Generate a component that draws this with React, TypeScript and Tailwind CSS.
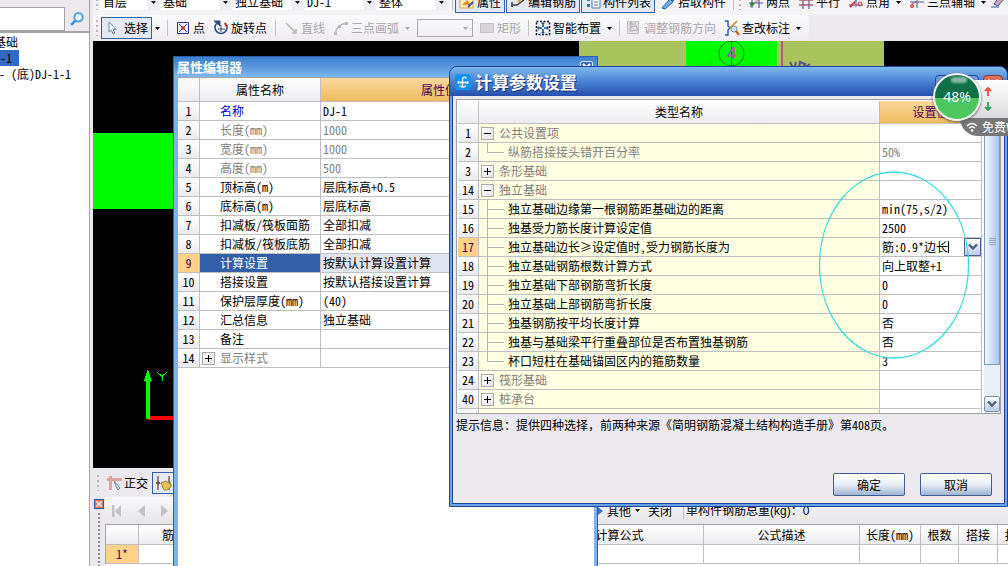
import React, { ReactNode } from "react";

type PropRow = { n: number; name: string; value?: string; tone?: "blue" | "gray"; group?: boolean; selected?: boolean };
type ParamRow = { n: number; name: string; value?: string; kind: "open" | "closed" | "child" | "last"; gray?: boolean; editing?: boolean };

const propRows: PropRow[] = [
  { n: 1, name: "名称", value: "DJ-1", tone: "blue" },
  { n: 2, name: "长度(mm)", value: "1000", tone: "gray" },
  { n: 3, name: "宽度(mm)", value: "1000", tone: "gray" },
  { n: 4, name: "高度(mm)", value: "500", tone: "gray" },
  { n: 5, name: "顶标高(m)", value: "层底标高+0.5" },
  { n: 6, name: "底标高(m)", value: "层底标高" },
  { n: 7, name: "扣减板/筏板面筋", value: "全部扣减" },
  { n: 8, name: "扣减板/筏板底筋", value: "全部扣减" },
  { n: 9, name: "计算设置", value: "按默认计算设置计算", selected: true },
  { n: 10, name: "搭接设置", value: "按默认搭接设置计算" },
  { n: 11, name: "保护层厚度(mm)", value: "(40)" },
  { n: 12, name: "汇总信息", value: "独立基础" },
  { n: 13, name: "备注" },
  { n: 14, name: "显示样式", tone: "gray", group: true },
];

const paramRows: ParamRow[] = [
  { n: 1, name: "公共设置项", kind: "open", gray: true },
  { n: 2, name: "纵筋搭接接头错开百分率", value: "50%", kind: "last", gray: true },
  { n: 3, name: "条形基础", kind: "closed", gray: true },
  { n: 14, name: "独立基础", kind: "open", gray: true },
  { n: 15, name: "独立基础边缘第一根钢筋距基础边的距离", value: "min(75,s/2)", kind: "child" },
  { n: 16, name: "独基受力筋长度计算设定值", value: "2500", kind: "child" },
  { n: 17, name: "独立基础边长≥设定值时,受力钢筋长度为", value: "筋:0.9*边长", kind: "child", editing: true },
  { n: 18, name: "独立基础钢筋根数计算方式", value: "向上取整+1", kind: "child" },
  { n: 19, name: "独立基础下部钢筋弯折长度", value: "0", kind: "child" },
  { n: 20, name: "独立基础上部钢筋弯折长度", value: "0", kind: "child" },
  { n: 21, name: "独基钢筋按平均长度计算", value: "否", kind: "child" },
  { n: 22, name: "独基与基础梁平行重叠部位是否布置独基钢筋", value: "否", kind: "child" },
  { n: 23, name: "杯口短柱在基础锚固区内的箍筋数量", value: "3", kind: "last" },
  { n: 24, name: "筏形基础", kind: "closed", gray: true },
  { n: 40, name: "桩承台", kind: "closed", gray: true },
];

const Icon = ({ children }: { children: ReactNode }) => (
  <svg viewBox="0 0 16 16" className="h-4 w-4 shrink-0" aria-hidden="true">{children}</svg>
);

const Caret = ({ muted = false }: { muted?: boolean }) => (
  <svg viewBox="0 0 5 3" className={muted ? "h-[3px] w-[5px] shrink-0 text-[#a8a6aa]" : "h-[3px] w-[5px] shrink-0 text-black"} aria-hidden="true">
    <path d="M0 0h5L2.5 3z" fill="currentColor" />
  </svg>
);

const Grip = () => <span className="mx-[3px] h-4 w-[2px] shrink-0 bg-[repeating-linear-gradient(#b9b7bb_0_2px,transparent_2px_5px)]" />;
const Sep = ({ wide }: { wide?: boolean }) => (
  <span className={"flex h-4 shrink-0 justify-center " + (wide ? "w-2" : "w-1.5")}><span className="w-px bg-[#c2c0c5]" /></span>
);

function Tool({ icon, label, muted, framed, caret }: { icon: ReactNode; label: string; muted?: boolean; framed?: boolean; caret?: boolean }) {
  return (
    <button
      disabled={muted}
      className={
        "flex h-[22px] shrink-0 items-center gap-0.5 whitespace-nowrap " +
        (muted ? "px-1 text-[#a8a6aa] " : "text-black ") +
        (framed ? "border border-[#335ea8] bg-[#e4e8f2] px-[3px]" : "px-1")
      }
    >
      <Icon>{icon}</Icon>
      {label}
      {caret && <span className="ml-1 flex"><Caret muted={muted} /></span>}
    </button>
  );
}

function Combo({ label, value, narrow }: { label: string; value: string; narrow?: boolean }) {
  return (
    <span className={"mr-0.5 flex h-4 shrink-0 items-center bg-white pl-[2px] " + (narrow ? "w-[58px]" : "w-[70px]")}>
      <select aria-label={label} className="min-w-0 flex-1 appearance-none bg-transparent">
        <option>{value}</option>
      </select>
      <span className="flex h-full w-[11px] items-center justify-center bg-[#efedf1]"><Caret /></span>
    </span>
  );
}

function TreeBox({ open, name }: { open?: boolean; name: string }) {
  return (
    <button aria-label={name} aria-expanded={!!open} className="h-[13px] w-[13px] shrink-0 border border-[#a9a9a9] bg-linear-to-br from-white to-[#e4e4e4]">
      <svg viewBox="0 0 11 11" className="h-[11px] w-[11px]" shapeRendering="crispEdges" aria-hidden="true">
        <path d={open ? "M2 5h7v1H2z" : "M2 5h7v1H2zM5 2h1v7H5z"} />
      </svg>
    </button>
  );
}

const Chevron = () => (
  <svg viewBox="0 0 10 8" className="h-2 w-2.5" aria-hidden="true">
    <path d="M1 1.5l4 4 4-4" fill="none" stroke="#4d6185" strokeWidth="2.4" />
  </svg>
);

function Sidebar() {
  return (
    <aside className="flex w-[90px] shrink-0 flex-col border-r border-[#a5a3a8] bg-[#ebe9ed] pt-[7px]">
      <div className="flex h-[26px] items-start border-b-2 border-[#a5a3a8]">
        <input aria-label="搜索构件" className="h-6 w-[65px] border border-l-0 border-[#a5a3a8] bg-white px-1" />
        <button aria-label="搜索" className="flex h-6 flex-1 items-center justify-center">
          <svg viewBox="0 0 14 14" className="h-3.5 w-3.5" aria-hidden="true">
            <circle cx="8.5" cy="5.3" r="4.2" fill="#e9f5ff" stroke="#4aa3e6" strokeWidth="2" />
            <path d="M5.6 8.4L1.2 12.8" stroke="#3b8fd8" strokeWidth="2.6" />
          </svg>
        </button>
      </div>
      <ul className="flex-1 bg-white pt-px leading-4">
        <li className="-ml-1.5">基础</li>
        <li><span className="inline-block h-4 w-[19px] bg-[#316ac5]"><span className="-ml-1.5">J-1</span></span></li>
        <li className="flex gap-1.5"><span className="-ml-px w-1.5">-</span>(底)DJ-1-1</li>
      </ul>
    </aside>
  );
}

function TopToolbar() {
  return (
    <div className="flex h-[15px] items-end overflow-hidden bg-[#f4f3f6] pb-0.5 whitespace-nowrap">
      <div className="flex h-[22px] items-center">
        <Grip />
        <Combo label="楼层" value="首层" narrow />
        <Combo label="构件类型" value="基础" />
        <Combo label="构件" value="独立基础" />
        <Combo label="构件名称" value="DJ-1" />
        <Combo label="分层" value="整体" />
        <Sep />
        <div className="flex gap-px">
          <Tool framed label="属性" icon={<><path d="M1 3h13v11H1z" fill="#fff2c4" stroke="#e2a13a" /><path d="M3 11l5-5 4 5z" fill="#e5872a" /><path d="M9 13l5-5" stroke="#35589b" strokeWidth="2" /></>} />
          <Tool framed label="编辑钢筋" icon={<><path d="M1 11h6l7-5M2 8v5" fill="none" stroke="#444" strokeWidth="1.5" /><path d="M8 8l6-6" stroke="#d6a12a" strokeWidth="2" /></>} />
          <Tool framed label="构件列表" icon={<><path d="M2 4h3v3H2zM2 10h3v3H2z" fill="#3b6fc4" /><path d="M7 1h8v13H7z" fill="#f6f9ff" stroke="#5577aa" /><path d="M9 5h4M9 8h4M9 11h4" stroke="#5577aa" /></>} />
          <Tool label="拾取构件" icon={<path d="M2 14l8-9 3 3-8 7zM9 4l3-3 3 4-2 2z" fill="#75aee8" stroke="#245a9b" />} />
        </div>
        <Sep />
        <Grip />
        <Tool label="两点" icon={<><path d="M4 0v14M11 0v14M1 9h14" stroke="#4b5d9c" strokeWidth="1.2" /><path d="M2 13L13 3" stroke="#c23a3a" /><circle cx="4" cy="10" r="2" fill="#2f8b3a" /></>} />
        <Tool label="平行" icon={<><path d="M5 0v15M11 0v15" stroke="#4b5d9c" strokeWidth="1.2" /><path d="M1 6h14M1 11h14" stroke="#b25b5b" strokeWidth="1.3" /></>} />
        <Tool label="点角" caret icon={<><path d="M2 13L13 1M1 11h14M8 1v12" stroke="#4b5d9c" /><path d="M2 13l5-5" stroke="#d33" strokeWidth="2" /><circle cx="12" cy="10" r="2" fill="none" stroke="#d33" /></>} />
        <Tool label="三点辅轴" caret icon={<><path d="M1 8h14M8 1v13" stroke="#4b5d9c" /><path d="M8 8c-5 0-5 3-5 6" fill="none" stroke="#c23a3a" /><circle cx="3" cy="12" r="1.5" fill="none" stroke="#d33" /></>} />
        <Icon><path d="M1 13h8M4 10l6-8 4 3-6 7z" fill="#d8a0b8" stroke="#345a9a" /></Icon>
      </div>
    </div>
  );
}

function DrawToolbar() {
  return (
    <div className="flex h-[26px] bg-[#ebe9ed] whitespace-nowrap">
      <div className="flex items-center rounded-sm bg-linear-to-b from-[#fbfbfc] to-[#edebef] pr-1">
        <Grip />
        <button className="flex h-[22px] w-[51px] shrink-0 items-center gap-1 border border-[#335ea8] bg-[#e3e8f2] pl-0.5">
          <Icon><path d="M5 2v10l2.4-2 1.8 4 1.6-.8-1.8-3.7H12z" fill="#fff" stroke="#6d87ad" /></Icon>选择
        </button>
        <button aria-label="选择方式" className="flex h-[22px] w-[11px] items-center justify-center"><Caret /></button>
        <Sep wide />
        <Tool label="点" icon={<><path d="M2.5 2.5h11v11h-11z" fill="#e9ecfa" stroke="#27348b" /><path d="M4 4l8 8M12 4l-8 8" stroke="#27348b" /><circle cx="8" cy="8" r="1.8" fill="#d22" /></>} />
        <Tool label="旋转点" icon={<><path d="M4 3a6 6 0 1 0 8 0" fill="none" stroke="#304d80" strokeWidth="1.6" /><path d="M1 1h6v5zM8 5v7M5 9h7" fill="#304d80" stroke="#304d80" /><path d="M12 3l2 4" stroke="#c33" strokeWidth="2" /></>} />
        <Sep wide />
        <Tool muted label="直线" icon={<path d="M3 3l10 10M13 9v4H9" fill="none" stroke="#b9b7bb" strokeWidth="1.6" />} />
        <Tool muted caret label="三点画弧" icon={<><path d="M2 14C3 7 7 4 14 3" fill="none" stroke="#b9b7bb" strokeWidth="1.5" /><path d="M1 12h3v3H1zM5 5h3v3H5zM12 2h3v3h-3z" fill="#b9b7bb" /></>} />
        <span className="mr-0.5 ml-[3px] flex h-[18px] w-14 items-center border border-[#aaa8ad] pr-1">
          <select disabled aria-label="画弧方式" className="min-w-0 flex-1 appearance-none bg-transparent"><option></option></select>
          <Caret muted />
        </span>
        <Tool muted label="矩形" icon={<path d="M1.500 3.500h13v9h-13z" fill="#d6d4d8" stroke="#c3c1c5" />} />
        <Sep />
        <Tool caret label="智能布置" icon={<><path d="M1.500 1.500h13v13h-13z" fill="#eef4ff" stroke="#111" strokeWidth="1.6" strokeDasharray="2 1.500" /><path d="M8 3v4M8 9v4M3 8h4M9 8h4" stroke="#20508f" strokeWidth="1.6" /><path d="M8 2l2 2H6zM8 14l2-2H6zM2 8l2-2v4zM14 8l-2-2v4z" fill="#20508f" /></>} />
        <Sep />
        <Tool muted label="调整钢筋方向" icon={<><path d="M1.500 1.500h11v12h-11z" fill="#e4e2e6" stroke="#c0bec3" /><path d="M3 4h7M5 2l-1 9 8-1-2-4-5 1" fill="none" stroke="#bbb9be" strokeWidth="1.500" /></>} />
        <Tool caret label="查改标注" icon={<><path d="M1 1h3v5l2 2-2 2v5H1" fill="none" stroke="#2b55b0" strokeWidth="1.4" /><path d="M13 1L6 8" stroke="#d9a23c" strokeWidth="2" /><circle cx="10" cy="9" r="3" fill="#cfe6f7" stroke="#7c8ea0" /><path d="M12 11l3 4" stroke="#b06a2c" strokeWidth="2.200" /></>} />
      </div>
    </div>
  );
}

function ModelView() {
  return (
    <svg className="min-h-0 w-full flex-1 bg-black" shapeRendering="crispEdges" role="img" aria-label="绘图区">
      <rect x="0" y="92" width="170" height="76" fill="#00fa00" />
      <rect x="486" y="0" width="305" height="120" fill="#a9c35f" />
      <rect x="593" y="0" width="91" height="80" fill="#00fa00" />
      <rect x="688" y="0" width="2" height="60" fill="#bf4f9f" />
      <g shapeRendering="auto">
        <circle cx="638.500" cy="12.500" r="12.500" fill="none" stroke="#0c7a0c" />
        <path d="M638.500 0v25" stroke="#c21515" />
        <text x="639" y="18" textAnchor="middle" fontSize="16" fontWeight="bold" fill="#b84fb0" fontFamily="Liberation Sans, sans-serif">4</text>
        <path d="M697 21l4 8 2-8M706 28l1-7 5 2-3 5 8-5" fill="none" stroke="#5a4f8a" strokeWidth="2" />
      </g>
      <rect x="55" y="375" width="40" height="4" fill="#ff0000" />
      <rect x="53" y="340" width="4" height="38" fill="#00ff00" />
      <path d="M55 328l4 12h-8z" fill="#00ff00" />
      <path d="M64 331l5 4.500 5-4.500M69 335v5" fill="none" stroke="#00ff00" />
    </svg>
  );
}

const calcColumns = [
  { label: "筋号", width: "w-[71px]" },
  { label: "", width: "w-[326px]" },
  { label: "计算公式", width: "w-[168px]" },
  { label: "公式描述", width: "w-[156px]" },
  { label: "长度(mm)", width: "w-[61px]" },
  { label: "根数", width: "w-[38px]" },
  { label: "搭接", width: "w-[39px]" },
  { label: "损耗", width: "w-[39px]" },
];

function BottomArea() {
  return (
    <div className="flex shrink-0 flex-col bg-[#ebe9ed]">
      <div className="flex h-[29px] items-center pl-px">
        <Grip />
        <button className="flex items-center gap-0.5 px-1">
          <Icon><path d="M1 3h15v3H1zM3 1h3v14H3z" fill="#dfa3a3" /><path d="M8 6l6 7-2 2-2-4z" fill="#cfdbe8" stroke="#7a8ba3" /></Icon>正交
        </button>
        <button aria-label="捕捉" className="flex h-[22px] w-8 items-center border border-[#335ea8] bg-[#e3e8f2] pl-[3px]">
          <Icon><path d="M2 1v14M13 1v14M0 8h4" stroke="#7b4a4a" strokeWidth="1.300" /><path d="M2 6l2 2-2 2-2-2zM13 6l2 2-2 2z" fill="#7b4a4a" /><path d="M5 8l5-2 5 3v3l-4 3H8z" fill="#e5bf55" stroke="#a8852c" /></Icon>
        </button>
      </div>
      <div className="flex">
        <div className="flex w-3 shrink-0 flex-col items-center gap-1 pt-0.5">
          <button aria-label="关闭面板" className="h-2.5 w-2.5 border border-[#2f59a6] bg-[#e0795f]">
            <svg viewBox="0 0 8 8" className="h-2 w-2" aria-hidden="true"><path d="M1.500 1.500l5 5M6.500 1.500l-5 5" stroke="#fff" strokeWidth="1.400" /></svg>
          </button>
          <span className="w-[2px] flex-1 bg-[repeating-linear-gradient(#8f8d92_0_2px,transparent_2px_4px)]" />
        </div>
        <div className="min-w-0 flex-1 overflow-hidden">
          <div className="flex h-[27px] items-center bg-linear-to-b from-[#f8f8fa] to-[#e6e4e8] whitespace-nowrap">
            <div className="flex w-[493px] shrink-0 gap-2 pl-1">
              <button aria-label="首条"><Icon><path d="M3 2h2.500v12H3zM12 2v12L6 8z" fill="#c3c1c6" /></Icon></button>
              <button aria-label="上一条"><Icon><path d="M12 2v12L5 8z" fill="#c3c1c6" /></Icon></button>
              <button aria-label="下一条"><Icon><path d="M4 2v12l7-6z" fill="#c3c1c6" /></Icon></button>
            </div>
            <svg viewBox="0 0 5 8" className="mr-1 h-2 w-[5px]" aria-hidden="true"><path d="M0 0l5 4-5 4z" fill="#3d6ed0" /></svg>
            <button className="flex items-center gap-1">其他<Caret /></button>
            <button className="mx-2">关闭</button>
            <Sep />
            <span>单构件钢筋总重<span className="font-['Liberation_Sans',sans-serif]">(kg)</span>：<span className="font-['Liberation_Sans',sans-serif]">0</span></span>
          </div>
          <table className="w-[932px] table-fixed border-separate border-spacing-0 border-t border-l border-[#a5a3a8] bg-white">
            <thead>
              <tr className="h-5 bg-linear-to-b from-white to-[#ebeaee]">
                <th className="w-[33px] border-r border-b border-[#bfbfbf] p-0" />
                {calcColumns.map((c, i) => (
                  <th key={i} className={"border-r border-b border-[#bfbfbf] p-0 text-center font-normal whitespace-nowrap " + c.width}>{c.label}</th>
                ))}
              </tr>
            </thead>
            <tbody>
              <tr className="h-[19px]">
                <td className="border-r border-b border-[#bfbfbf] bg-[#ffd28a] p-0 text-center text-[#4b0055]">1*</td>
                {calcColumns.map((c, i) => <td key={i} className="border-r border-b border-[#bfbfbf] p-0" />)}
              </tr>
            </tbody>
          </table>
          <div className="h-[2px] bg-white" />
        </div>
      </div>
    </div>
  );
}

function PropertyEditor() {
  return (
    <section aria-label="属性编辑器" className="absolute top-14 bottom-0 left-[173px] flex w-[425px] flex-col border border-b-0 border-[#2b5fae] bg-[#7fb2ea]">
      <header className="flex h-[20px] items-center bg-linear-to-b from-[#3f7fcf] via-[#5b97dd] to-[#7db9f0] pr-1 pl-[3px]">
        <h2 className="flex-1 text-[13px] font-bold text-white">属性编辑器</h2>
        <button aria-label="关闭属性编辑器" className="flex h-[13px] w-[13px] items-center justify-center rounded-[2px] border border-[#cfe2f8] bg-[#3d6cb8]">
          <svg viewBox="0 0 9 9" className="h-[9px] w-[9px]" aria-hidden="true"><path d="M1 1l7 7M8 1L1 8" stroke="#fff" strokeWidth="2" /></svg>
        </button>
      </header>
      <div className="mx-[3px] flex-1 border-t border-l border-[#a5a3a8] bg-white">
        <table className="w-full table-fixed border-separate border-spacing-0">
          <colgroup><col className="w-[22px]" /><col className="w-[121px]" /><col className="w-[237px]" /><col /></colgroup>
          <thead>
            <tr className="h-6 bg-linear-to-b from-white to-[#ebeaee]">
              <th className="border-r border-b border-[#bfbfbf] p-0" />
              <th className="border-r border-b border-[#bfbfbf] p-0 font-normal">属性名称</th>
              <th className="border-r border-b border-[#bfbfbf] bg-linear-to-b from-[#fad79b] to-[#f0bc60] p-0 font-normal text-[#4b0055]">属性值</th>
              <th className="border-b border-[#bfbfbf] p-0" />
            </tr>
          </thead>
          <tbody className="leading-4">
            {propRows.map((r) => (
              <tr key={r.n} className="h-[19px]">
                <td className={"border-r border-b border-[#bfbfbf] p-0 text-center " + (r.selected ? "bg-[#ffd28a] text-[#4b0055]" : "bg-linear-to-b from-white to-[#ebeaee]")}>{r.n}</td>
                <td className={"border-r border-b border-[#bfbfbf] p-0 " + (r.selected ? "bg-[#335ea8] text-white" : r.tone === "blue" ? "text-[#0000e0]" : r.tone === "gray" ? "text-[#808080]" : "")}>
                  <div className="flex items-center">
                    <span className="flex w-5 shrink-0 pl-0.5">{r.group && <TreeBox name={r.name} />}</span>
                    {r.name}
                  </div>
                </td>
                <td className={"border-r border-b border-[#bfbfbf] py-0 pr-0 pl-0.5 " + (r.selected ? "bg-[#e0e5f2]" : r.tone === "gray" ? "text-[#808080]" : "")}>{r.value}</td>
                <td className="border-b border-[#bfbfbf] p-0" />
              </tr>
            ))}
          </tbody>
        </table>
      </div>
    </section>
  );
}

function ParamName({ row }: { row: ParamRow }) {
  const text = row.gray ? "text-[#808080]" : "";
  if (row.kind === "open" || row.kind === "closed") {
    return (
      <div className={"flex h-[18px] items-center gap-[5px] pl-0.5 " + text}>
        <TreeBox open={row.kind === "open"} name={row.name} />
        {row.name}
      </div>
    );
  }
  return (
    <div className={"flex h-[18px] pl-2 " + text}>
      <span className="flex w-[21px] shrink-0 flex-col">
        <span className="h-[10px] w-[17px] border-b border-l border-[#b5b5b5]" />
        {row.kind === "child" && <span className="flex-1 border-l border-[#b5b5b5]" />}
      </span>
      <span className="leading-[18px]">{row.name}</span>
    </div>
  );
}

function ParamDialog() {
  return (
    <section role="dialog" aria-label="计算参数设置" className="absolute top-[66px] left-[449px] w-[559px] rounded-t-lg border border-[#1f459c] bg-[#6ba2e6]">
      <header className="flex h-[29px] items-center rounded-t-lg bg-linear-to-b from-[#7fb8ec] via-[#4a82d2] to-[#274fae] pl-[5px]">
        <svg viewBox="0 0 16 16" className="mr-1 h-4 w-4" aria-hidden="true">
          <rect width="16" height="16" rx="3" fill="#1590f5" />
          <path d="M2.500 8.500h11M7.500 12.500V5.500c0-3 3.500-3 3.500-.8M5 11.500c0 2 5.500 2 5.500 0M3.500 7v3M12.500 7v3" fill="none" stroke="#fff" strokeWidth="1.300" />
        </svg>
        <h2 className="flex-1 text-[17px] leading-6 font-bold text-white [text-shadow:1px_1px_0_#16337c]">计算参数设置</h2>
        <div className="mt-1.5 mr-1 flex h-5 gap-1">
          <button aria-label="最小化" className="w-5 rounded-sm border border-[#234a9e] bg-[#6c9fe0]" />
          <button aria-label="最大化" className="w-5 rounded-sm border border-[#234a9e] bg-[#6c9fe0]" />
          <button aria-label="关闭" className="flex w-5 items-center justify-center rounded-sm border border-[#8b3a3a] bg-[#d9705c]">
            <svg viewBox="0 0 12 12" className="h-3 w-3" aria-hidden="true"><path d="M1 1l10 10M11 1L1 11" stroke="#fff" strokeWidth="2.500" /></svg>
          </button>
        </div>
      </header>
      <div className="mx-[2px] mb-[2px] border border-t-0 border-[#1f459c] bg-[#ebe9ed] px-[3px] pt-[3px] pb-[7px]">
        <div className="flex h-[315px] overflow-hidden border border-[#a0a0a5] bg-white pt-px pl-px">
          <div className="min-w-0 flex-1 overflow-hidden">
            <table className="w-full table-fixed border-separate border-spacing-0">
              <colgroup><col className="w-[21px]" /><col /><col className="w-[102px]" /></colgroup>
              <thead>
                <tr className="h-[23px] bg-linear-to-b from-white to-[#ebeaee]">
                  <th className="border-r border-b border-[#bfbfbf] p-0" />
                  <th className="border-r border-b border-[#bfbfbf] p-0 font-normal">类型名称</th>
                  <th className="border-r border-b border-[#bfbfbf] bg-linear-to-b from-[#fad79b] to-[#f0bc60] p-0 font-normal text-[#4b0055]">设置值</th>
                </tr>
              </thead>
              <tbody className="leading-4">
                {paramRows.map((r) => (
                  <tr key={r.n} className="h-[19px]">
                    <td className={"border-r border-b border-[#bfbfbf] p-0 text-center " + (r.editing ? "bg-[#ffd28a] text-[#4b0055]" : "bg-linear-to-b from-white to-[#ebeaee]")}>{r.n}</td>
                    <td className="border-r border-b border-[#bfbfbf] bg-[#ffffe1] p-0"><ParamName row={r} /></td>
                    <td className={"border-r border-b border-[#bfbfbf] py-0 pr-0 pl-0.5 " + (r.gray ? "text-[#808080]" : "")}>
                      {r.editing ? (
                        <div className="flex h-[18px] items-center">
                          <input aria-label={r.name} defaultValue={r.value} className="h-4 w-[66px] bg-white p-0 outline-none" />
                          <span className="h-3 w-px bg-black" />
                          <button aria-label="展开选项" className="ml-auto flex h-[18px] w-[17px] items-center justify-center border border-[#47648f] bg-linear-to-b from-white to-[#b9cbe6]"><Chevron /></button>
                        </div>
                      ) : r.value}
                    </td>
                  </tr>
                ))}
                <tr className="h-[19px]">
                  <td className="border-r border-[#bfbfbf] bg-[#f7f6f9] p-0" />
                  <td className="border-r border-[#bfbfbf] bg-[#ffffe1] p-0" />
                  <td className="border-r border-[#bfbfbf] p-0" />
                </tr>
              </tbody>
            </table>
          </div>
          <div className="ml-0.5 flex w-4 shrink-0 flex-col bg-[#e8eff9] pb-px">
            <div className="h-4 border border-[#7f9cc4] bg-[#dbe7f7]" />
            <div className="flex h-[248px] items-center justify-center border border-[#7f9cc4] bg-linear-to-r from-[#f2f7fe] to-[#a9c5ee]">
              <span className="h-[7px] w-[7px] bg-[repeating-linear-gradient(#8ea6c8_0_1px,transparent_1px_2px)]" />
            </div>
            <span className="flex-1" />
            <button aria-label="向下滚动" className="flex h-4 items-center justify-center rounded-[2px] border border-[#7f93b3] bg-linear-to-b from-white to-[#b9cbe6]"><Chevron /></button>
          </div>
        </div>
        <p className="mt-0.5 h-[57px] leading-[18px]">提示信息：提供四种选择，前两种来源《简明钢筋混凝土结构构造手册》第408页。</p>
        <div className="flex justify-end gap-[15px] pr-[9px]">
          {["确定", "取消"].map((t) => (
            <button key={t} className="h-[23px] w-[72px] rounded-[2px] border border-[#3c5f8f] bg-linear-to-b from-white via-[#e9eef6] to-[#9fb3d3]">{t}</button>
          ))}
        </div>
      </div>
      <svg viewBox="0 0 152 190" className="pointer-events-none absolute top-[104px] left-[368px] h-[190px] w-[152px]" aria-hidden="true">
        <ellipse cx="76" cy="94" rx="74.500" ry="93" fill="none" stroke="#38dada" strokeWidth="1.300" />
      </svg>
    </section>
  );
}

function SpeedBall() {
  return (
    <div className="absolute top-[72px] right-0 h-16 w-[75px]">
      <div className="absolute top-2 right-0 flex h-[38px] w-12 flex-col items-end justify-center gap-1 bg-linear-to-b from-[#fdfdfd] to-[#dcdcde] pr-4 shadow">
        <svg viewBox="0 0 8 10" className="h-2.5 w-2" aria-hidden="true"><path d="M4 1v8M1 4l3-3 3 3" fill="none" stroke="#e8553a" strokeWidth="1.800" /></svg>
        <svg viewBox="0 0 8 10" className="h-2.5 w-2" aria-hidden="true"><path d="M4 1v8M1 6l3 3 3-3" fill="none" stroke="#2aa058" strokeWidth="1.800" /></svg>
      </div>
      <div className="absolute top-[46px] right-0 flex h-[18px] w-12 items-center gap-1 overflow-hidden rounded-bl-full bg-[#77777a] pl-1.5 font-['Noto_Sans_CJK_SC',sans-serif] whitespace-nowrap text-white">
        <svg viewBox="0 0 12 10" className="h-2.5 w-3 shrink-0" aria-hidden="true">
          <path d="M1 4c3-3.500 7-3.500 10 0M3.200 6.200c2-2 3.700-2 5.600 0" fill="none" stroke="#fff" strokeWidth="1.500" /><circle cx="6" cy="8.500" r="1.300" fill="#fff" />
        </svg>
        免费W
      </div>
      <div className="absolute top-px left-0 flex h-12 w-12 items-center justify-center rounded-full border-2 border-[#f0f0f0] bg-linear-to-b from-[#0f7048] from-52% to-[#4cc75f] to-52% font-['Open_Sans',sans-serif] text-[14px] text-white shadow-[0_1px_3px_#555]">
        <span className="absolute top-0.5 left-4 h-1.5 w-4 rounded-full bg-white/50 blur-[1px]" />
        48%
      </div>
    </div>
  );
}

export default function App() {
  return (
    <div className="relative flex h-screen overflow-hidden bg-[#ebe9ed] font-['Noto_Sans_Mono_CJK_SC','Noto_Sans_CJK_SC',sans-serif] text-[12px] leading-4 text-black">
      <Sidebar />
      <main className="ml-[3px] flex min-w-0 flex-1 flex-col">
        <TopToolbar />
        <DrawToolbar />
        <ModelView />
        <BottomArea />
      </main>
      <PropertyEditor />
      <ParamDialog />
      <SpeedBall />
    </div>
  );
}
